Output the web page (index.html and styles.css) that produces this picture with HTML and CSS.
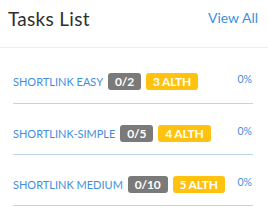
FILE: index.html
```html
<!DOCTYPE html>
<html>
<head>
<meta charset="utf-8">
<link rel="stylesheet" href="styles.css">
</head>
<body>
<div class="card">
  <div class="header">
    <div class="title">Tasks List</div>
    <a class="view-all">View All</a>
  </div>
  <div class="list">
    <div class="row first">
      <div class="left">
        <span class="name">SHORTLINK EASY</span>
        <span class="badge gray">0/2</span>
        <span class="badge yellow">3 ALTH</span>
      </div>
      <div class="pct">0%</div>
    </div>
    <div class="row">
      <div class="left">
        <span class="name">SHORTLINK-SIMPLE</span>
        <span class="badge gray">0/5</span>
        <span class="badge yellow">4 ALTH</span>
      </div>
      <div class="pct">0%</div>
    </div>
    <div class="row">
      <div class="left">
        <span class="name">SHORTLINK MEDIUM</span>
        <span class="badge gray">0/10</span>
        <span class="badge yellow">5 ALTH</span>
      </div>
      <div class="pct">0%</div>
    </div>
  </div>
</div>
</body>
</html>
```
FILE: styles.css
```css
html, body {
  margin: 0;
  padding: 0;
  background: #fff;
}
.card {
  width: 268px;
  font-family: "Lato", "Noto Sans", sans-serif;
}
.header {
  display: flex;
  justify-content: space-between;
  align-items: flex-start;
  height: 48px;
  box-sizing: border-box;
  padding: 7px 10px 0 8px;
  border-bottom: 1px solid #ececec;
}
.title {
  font-size: 19px;
  line-height: 24px;
  color: #2f2f2f;
  letter-spacing: 0.3px;
}
.view-all {
  font-size: 14px;
  line-height: 18px;
  color: #3f8fdc;
  margin-top: 2px;
}
.list {
  padding: 0 15px 0 13px;
}
.row {
  display: flex;
  justify-content: space-between;
  align-items: flex-start;
  height: 51px;
  box-sizing: border-box;
  padding-top: 21px;
  border-bottom: 1px solid #bcd5ec;
}
.row.first {
  height: 56px;
  padding-top: 25px;
}
.left {
  display: flex;
  align-items: center;
  gap: 5px;
}
.name {
  font-size: 11px;
  color: #3f8fdc;
}
.badge {
  display: inline-block;
  height: 17px;
  line-height: 17px;
  padding: 0 7px;
  border-radius: 3px;
  color: #fff;
  font-weight: bold;
  font-size: 12px;
  letter-spacing: -0.2px;
}
.gray {
  background: #7a7a7a;
}
.yellow {
  background: #ffc20e;
}
.pct {
  font-size: 10.5px;
  line-height: 13px;
  color: #3f8fdc;
  margin-right: 1px;
}
```
